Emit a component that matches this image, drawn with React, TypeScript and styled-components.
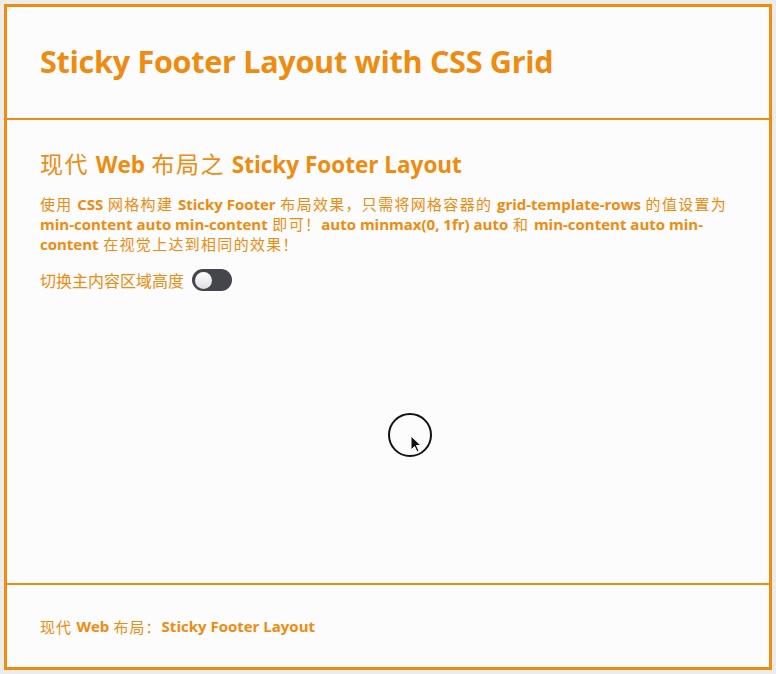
import React, { useState } from 'react';
import styled, { createGlobalStyle } from 'styled-components';

const ORANGE = '#ef8b0f';

const GlobalStyle = createGlobalStyle`
  html, body {
    margin: 0;
    padding: 0;
    background: #ececec;
  }
  body {
    font-family: "Noto Sans CJK SC", "Open Sans", sans-serif;
    color: ${ORANGE};
  }
  * {
    box-sizing: border-box;
  }
`;

const Page = styled.div`
  position: relative;
  margin: 4px;
  height: 666px;
  width: 768px;
  border: 3px solid ${ORANGE};
  background: #fcfcfc;
  display: grid;
  grid-template-rows: min-content auto min-content;
`;

const Header = styled.header`
  padding: 0 33px 4px;
  height: 113px;
  display: flex;
  align-items: center;
  border-bottom: 2px solid ${ORANGE};
`;

const Title = styled.h1`
  margin: 0;
  font-family: "Open Sans", sans-serif;
  font-weight: 700;
  font-size: 30.6px;
  letter-spacing: -0.3px;
`;

const Main = styled.main`
  padding: 28px 33px 0;
`;

const Heading = styled.h2`
  margin: 0 0 14px;
  font-size: 23px;
  font-weight: 400;
  line-height: 30px;
  letter-spacing: 1.5px;
`;

const Latin = styled.span<{ size?: number }>`
  font-family: "Open Sans", sans-serif;
  font-weight: 700;
  letter-spacing: 0;
  font-size: ${({ size }) => (size ? `${size}px` : 'inherit')};
`;

const Paragraph = styled.p`
  margin: 0 0 14px;
  font-size: 15px;
  line-height: 19px;
  letter-spacing: 1.3px;
`;

const ToggleRow = styled.label`
  display: flex;
  align-items: center;
  gap: 8px;
  font-size: 16px;
`;

const Track = styled.button<{ on: boolean }>`
  width: 40px;
  height: 22px;
  border-radius: 11px;
  border: none;
  padding: 0 3px;
  background: ${({ on }) => (on ? ORANGE : '#45464b')};
  display: flex;
  align-items: center;
  justify-content: ${({ on }) => (on ? 'flex-end' : 'flex-start')};
  cursor: pointer;
`;

const Knob = styled.span`
  width: 17px;
  height: 17px;
  border-radius: 50%;
  background: linear-gradient(#ffffff, #dedede);
`;

const Footer = styled.footer`
  height: 84px;
  padding: 0 33px;
  display: flex;
  align-items: center;
  white-space: pre;
  border-top: 2px solid ${ORANGE};
  font-size: 15px;
  letter-spacing: 1px;
`;

const Cursor = styled.div`
  position: absolute;
  left: 381px;
  top: 406px;
  width: 44px;
  height: 44px;
  border-radius: 50%;
  border: 2px solid #111;
  pointer-events: none;
`;

const Arrow = styled.svg`
  position: absolute;
  left: 20px;
  top: 20px;
`;

export default function App() {
  const [on, setOn] = useState(false);
  return (
    <>
      <GlobalStyle />
      <Page>
        <Header>
          <Title>Sticky Footer Layout with CSS Grid</Title>
        </Header>
        <Main>
          <Heading>
            现代 <Latin size={22.5}>Web</Latin> 布局之 <Latin size={22.5}>Sticky Footer Layout</Latin>
          </Heading>
          <Paragraph>
            使用 <Latin size={15}>CSS</Latin> 网格构建 <Latin size={15}>Sticky Footer</Latin> 布局效果，只需将网格容器的{' '}
            <Latin size={15}>grid-template-rows</Latin> 的值设置为{' '}
            <Latin size={15}>min-content auto min-content</Latin> 即可！
            <Latin size={15}>auto minmax(0, 1fr) auto</Latin> 和{' '}
            <Latin size={15}>min-content auto min-content</Latin> 在视觉上达到相同的效果！
          </Paragraph>
          <ToggleRow>
            切换主内容区域高度
            <Track on={on} onClick={() => setOn(!on)}>
              <Knob />
            </Track>
          </ToggleRow>
        </Main>
        <Footer>
          现代 <Latin>Web</Latin> 布局：<Latin>Sticky Footer Layout</Latin>
        </Footer>
        <Cursor>
          <Arrow width="14" height="20" viewBox="0 0 14 20">
            <path d="M1 1 L1 15 L4.5 11.5 L7 17 L9 16 L6.5 10.5 L11 10.5 Z" fill="#111" stroke="#fff" strokeWidth="1" />
          </Arrow>
        </Cursor>
      </Page>
    </>
  );
}
